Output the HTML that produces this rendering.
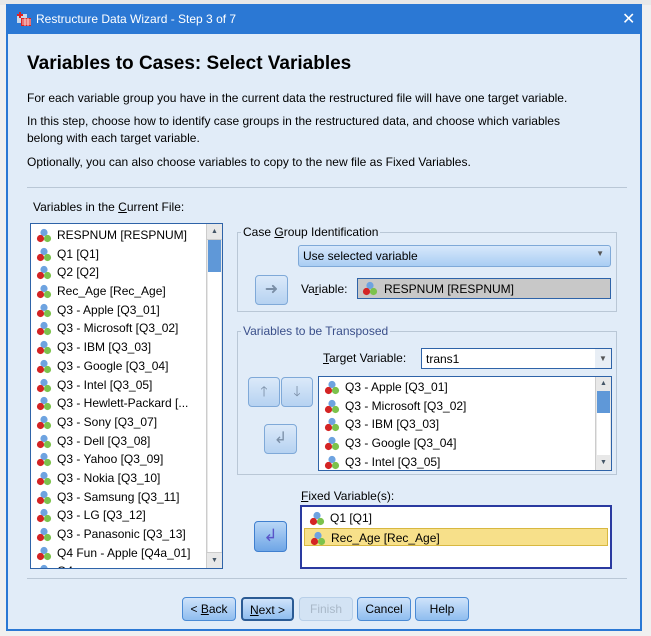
<!DOCTYPE html>
<html><head><style>
*{box-sizing:border-box;margin:0;padding:0}
body{width:651px;height:636px;background:#f0f0f0;font-family:"Liberation Sans",sans-serif;font-size:12px;color:#000;position:relative;overflow:hidden}
.a{position:absolute}
#win{left:6px;top:4px;width:636px;height:627px;background:#2b78d4}
#body{left:8px;top:34px;width:632px;height:595px;background:#e1ecf8}
.t{position:absolute;white-space:nowrap}
.list{position:absolute;background:#fff;border:1px solid #2e63a8}
.item{height:18.7px;line-height:18.7px;padding-left:26px;position:relative;white-space:nowrap;font-size:12px}
.ic{position:absolute;left:5px;top:2px;width:16px;height:15px}
.sb{position:absolute;right:0;top:0;bottom:0;width:16px;background:#e8e8e8;border-left:1px solid #ccc}
.btn{position:absolute;border:1px solid #7fa9d8;border-radius:4px;background:linear-gradient(#dbe9f9,#b6d2f1);text-align:center}
.fs{position:absolute;border:1px solid #b9c7d6}
.lg{position:absolute;top:-8px;left:3px;background:#e1ecf8;padding:0 2px;font-size:12px}
.bb{position:absolute;top:597px;height:24px;line-height:22px;border:1px solid #4a8ad4;border-radius:4px;background:linear-gradient(#cfe3fa,#8fbdef);text-align:center;font-size:12px}
u{text-decoration:underline}
</style></head><body>
<div class="a" style="left:0;top:0;width:651px;height:5px;background:#e8e8e8"></div>
<div class="a" id="win"></div>
<svg class="a" style="left:16px;top:11px" width="16" height="16"><rect x="1" y="3" width="10" height="9" fill="#c7d7ea"/><rect x="5" y="7" width="10" height="8" fill="#d22"/><path d="M6 9h9M6 11h9M6 13h9M9 7v8M12 7v8" stroke="#fff" stroke-width=".7"/><path d="M4 1v6M1 4h6" stroke="#d22" stroke-width="2"/></svg>
<div class="t" style="left:36px;top:12px;color:#fff;font-size:12px">Restructure Data Wizard - Step 3 of 7</div>
<div class="t" style="left:622px;top:9px;color:#fff;font-size:16px">✕</div>
<div class="a" id="body"></div>
<div class="t" style="left:27px;top:53px;font-size:19px;font-weight:bold">Variables to Cases: Select Variables</div>
<div class="t" style="left:27px;top:91px">For each variable group you have in the current data the restructured file will have one target variable.</div>
<div class="t" style="left:27px;top:114px">In this step, choose how to identify case groups in the restructured data, and choose which variables</div>
<div class="t" style="left:27px;top:131px">belong with each target variable.</div>
<div class="t" style="left:27px;top:155px">Optionally, you can also choose variables to copy to the new file as Fixed Variables.</div>
<div class="a" style="left:27px;top:187px;width:600px;height:1px;background:#b9c7d6"></div>
<div class="t" style="left:33px;top:200px">Variables in the <u>C</u>urrent File:</div>

<div class="list" style="left:30px;top:223px;width:193px;height:346px;overflow:hidden;padding-top:2px">
<div class="sb"><div style="height:16px;border-bottom:1px solid #ccc;text-align:center;font-size:7px;line-height:16px;color:#456">▲</div><div style="position:absolute;top:16px;left:1px;right:1px;height:32px;background:#5f98d8"></div><div style="position:absolute;top:48px;left:1px;right:1px;height:280px;background:#fff"></div><div style="position:absolute;bottom:0;left:0;right:0;height:16px;border-top:1px solid #ccc;text-align:center;font-size:7px;line-height:16px;color:#456">▼</div></div>
<div id="L"></div>
</div>

<div class="fs" style="left:237px;top:232px;width:380px;height:80px"><div class="lg">Case <u>G</u>roup Identification</div></div>
<div class="a" style="left:298px;top:245px;width:313px;height:22px;border:1px solid #7fa9d8;border-radius:3px;background:linear-gradient(#d7e8fb,#a9cdf3)"><span class="t" style="left:4px;top:3px">Use selected variable</span><span class="t" style="right:6px;top:3px;font-size:8px;color:#555">▼</span></div>
<div class="btn" style="left:255px;top:275px;width:33px;height:30px;color:#7a8ea6;font-size:16px;line-height:27px">➜</div>
<div class="t" style="left:301px;top:282px">Va<u>r</u>iable:</div>
<div class="a" style="left:357px;top:278px;width:254px;height:21px;border:1px solid #2e63a8;background:#c8c8c8"><svg class="ic" viewBox="0 0 16 15" style="left:4px;top:2px"><circle cx="8" cy="4.5" r="3.6" fill="#6ea3e0"/><circle cx="4.5" cy="10.5" r="3.6" fill="#d42424"/><circle cx="11.5" cy="10.5" r="3.6" fill="#7cc24c"/></svg><span class="t" style="left:26px;top:3px">RESPNUM [RESPNUM]</span></div>

<div class="fs" style="left:237px;top:331px;width:380px;height:144px"><div class="lg" style="color:#3a4f8a">Variables to be Transposed</div></div>
<div class="t" style="left:323px;top:351px"><u>T</u>arget Variable:</div>
<div class="a" style="left:421px;top:348px;width:191px;height:21px;border:1px solid #2e63a8;background:#fff"><span class="t" style="left:4px;top:3px">trans1</span><span class="a" style="right:0;top:0;width:16px;height:19px;background:#e8eef5;font-size:8px;color:#555;text-align:center;line-height:19px">▼</span></div>
<div class="btn" style="left:248px;top:377px;width:32px;height:30px;color:#7a8ea6;font-size:14px;line-height:27px">🡑</div>
<div class="btn" style="left:281px;top:377px;width:32px;height:30px;color:#7a8ea6;font-size:14px;line-height:27px">🡓</div>
<div class="btn" style="left:264px;top:424px;width:33px;height:30px;color:#7a8ea6;font-size:16px;line-height:27px">↲</div>
<div class="list" style="left:318px;top:376px;width:294px;height:95px;overflow:hidden;padding-top:1px">
<div class="sb"><div style="height:14px;text-align:center;font-size:7px;line-height:14px;color:#456">▲</div><div style="position:absolute;top:14px;left:1px;right:1px;height:22px;background:#5f98d8"></div><div style="position:absolute;top:36px;left:1px;right:1px;height:42px;background:#fff"></div><div style="position:absolute;bottom:0;left:0;right:0;height:14px;text-align:center;font-size:7px;line-height:14px;color:#456">▼</div></div>
<div id="T"></div>
</div>

<div class="t" style="left:301px;top:489px"><u>F</u>ixed Variable(s):</div>
<div class="btn" style="left:254px;top:521px;width:33px;height:31px;background:linear-gradient(#b8d6f6,#6fa6e6);border-color:#3f7fcf;color:#5a55c8;font-size:17px;line-height:28px">↲</div>
<div class="list" style="left:300px;top:505px;width:312px;height:64px;border:2px solid #2a3aa0;padding:2px">
<div id="F"></div>
</div>

<div class="a" style="left:27px;top:578px;width:600px;height:1px;background:#b9c7d6"></div>
<div class="bb" style="left:182px;width:54px">&lt; <u>B</u>ack</div>
<div class="bb" style="left:241px;width:53px;border:2px solid #2b5b94"><u>N</u>ext &gt;</div>
<div class="bb" style="left:299px;width:54px;background:#d3e3f4;border-color:#b8cfe8;color:#a9b8c8">Finish</div>
<div class="bb" style="left:357px;width:54px">Cancel</div>
<div class="bb" style="left:415px;width:54px">Help</div>

<script>
var ic='<svg class="ic" viewBox="0 0 16 15"><circle cx="8" cy="4.5" r="3.6" fill="#6ea3e0"/><circle cx="4.5" cy="10.5" r="3.6" fill="#d42424"/><circle cx="11.5" cy="10.5" r="3.6" fill="#7cc24c"/></svg>';
function fill(id,arr,hl){document.getElementById(id).innerHTML=arr.map(function(s,i){return '<div class="item"'+(i===hl?' style="background:#f7e08a;border:1px solid #d8b840;margin-right:0"':'')+'>'+ic+s+'</div>'}).join('')}
fill('L',["RESPNUM [RESPNUM]","Q1 [Q1]","Q2 [Q2]","Rec_Age [Rec_Age]","Q3 - Apple [Q3_01]","Q3 - Microsoft [Q3_02]","Q3 - IBM [Q3_03]","Q3 - Google [Q3_04]","Q3 - Intel [Q3_05]","Q3 - Hewlett-Packard [...","Q3 - Sony [Q3_07]","Q3 - Dell [Q3_08]","Q3 - Yahoo [Q3_09]","Q3 - Nokia [Q3_10]","Q3 - Samsung [Q3_11]","Q3 - LG [Q3_12]","Q3 - Panasonic [Q3_13]","Q4 Fun - Apple [Q4a_01]","Q4"]);
fill('T',["Q3 - Apple [Q3_01]","Q3 - Microsoft [Q3_02]","Q3 - IBM [Q3_03]","Q3 - Google [Q3_04]","Q3 - Intel [Q3_05]"]);
fill('F',["Q1 [Q1]","Rec_Age [Rec_Age]"],1);
</script>
</body></html>
